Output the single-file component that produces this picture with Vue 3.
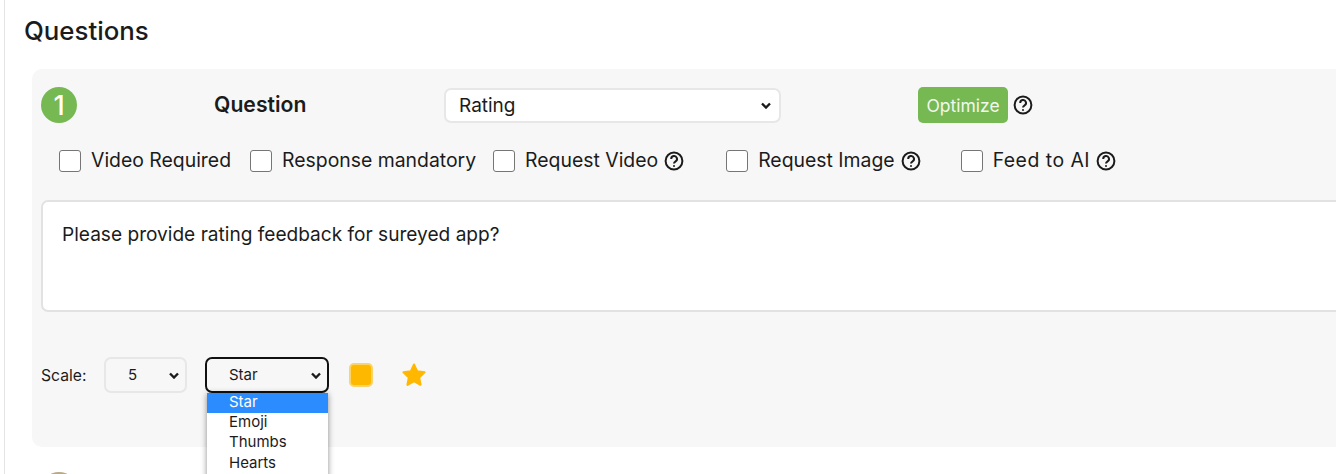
<script setup>
const checks = [
  { label: 'Video Required', help: false, cls: 'c1' },
  { label: 'Response mandatory', help: false, cls: 'c2' },
  { label: 'Request Video', help: true, cls: 'c3' },
  { label: 'Request Image', help: true, cls: 'c4' },
  { label: 'Feed to AI', help: true, cls: 'c5' }
]
const options = ['Star', 'Emoji', 'Thumbs', 'Hearts']
</script>

<template>
  <div class="page">
    <h2 class="title">Questions</h2>
    <section class="card">
      <div class="row-head">
        <span class="num">1</span>
        <span class="qlabel">Question</span>
        <div class="select type-select"><span>Rating</span><svg class="chev" viewBox="0 0 10 7"><path d="M1 1.5 5 5.5 9 1.5" /></svg></div>
        <button class="opt">Optimize</button>
        <svg class="help" viewBox="0 0 20 20"><circle cx="10" cy="10" r="8.4" /><path d="M7.2 8a2.9 2.9 0 1 1 4.4 2.4c-1 .6-1.6 1.1-1.6 2.2" /><circle class="dot" cx="10" cy="15" r="1" /></svg>
      </div>
      <div class="row-checks">
        <label v-for="c in checks" :key="c.label" class="check" :class="c.cls">
          <span class="box"></span>
          <span class="check-text">{{ c.label }}</span>
          <svg v-if="c.help" class="help" viewBox="0 0 20 20"><circle cx="10" cy="10" r="8.4" /><path d="M7.2 8a2.9 2.9 0 1 1 4.4 2.4c-1 .6-1.6 1.1-1.6 2.2" /><circle class="dot" cx="10" cy="15" r="1" /></svg>
        </label>
      </div>
      <div class="textarea">Please provide rating feedback for sureyed app?</div>
      <div class="row-scale">
        <span class="scale-label">Scale:</span>
        <div class="select small scale-select"><span>5</span><svg class="chev" viewBox="0 0 10 7"><path d="M1 1.5 5 5.5 9 1.5" /></svg></div>
        <div class="dropwrap">
          <div class="select small icon-select"><span>Star</span><svg class="chev" viewBox="0 0 10 7"><path d="M1 1.5 5 5.5 9 1.5" /></svg></div>
          <ul class="menu">
            <li v-for="(o, i) in options" :key="o" :class="{ active: i === 0 }">{{ o }}</li>
          </ul>
        </div>
        <span class="swatch"></span>
        <svg class="star" viewBox="0 0 24 24"><path d="M12 2.4l2.9 6.3 6.8.8-5 4.7 1.3 6.8-6-3.4-6 3.4 1.3-6.8-5-4.7 6.8-.8z" /></svg>
      </div>
    </section>
    <span class="next-num"></span>
  </div>
</template>

<style>
html, body { margin: 0; background: #fff; overflow: hidden; }
</style>

<style scoped>
.page {
  position: relative;
  width: 1336px;
  height: 474px;
  box-sizing: border-box;
  overflow: hidden;
  padding: 0 0 0 24px;
  font-family: Inter, "Liberation Sans", sans-serif;
  color: #1b1b1b;
  background: linear-gradient(to right, #fff 4px, #e4e4e4 4px, #e4e4e4 5px, #fff 5px);
}
.title { margin: 0; padding-top: 15px; height: 69px; box-sizing: border-box; font-size: 25.8px; line-height: 32px; font-weight: 500; }
.card {
  margin-left: 8px;
  width: 1400px;
  height: 378px;
  background: #f7f7f7;
  border-radius: 10px;
  box-sizing: border-box;
  padding: 18px 0 0 9px;
}
.row-head { display: flex; align-items: center; height: 36px; }
.num {
  width: 36px; height: 36px; border-radius: 50%;
  background: #76b852; color: #fff; display: flex; align-items: center; justify-content: center;
  font-size: 27px; font-weight: 500;
}
.qlabel { margin-left: 137px; width: 230px; padding-bottom: 3px; font-size: 21.2px; font-weight: 600; }
.select {
  box-sizing: border-box; display: flex; align-items: center; justify-content: space-between;
  background: #fff; border: 2px solid #e7e7e7; border-radius: 7px;
}
.type-select { width: 337px; height: 35px; padding: 0 8px 0 13px; font-size: 19px; }
.opt {
  margin-left: 137px; width: 90px; height: 36px; border: 0; border-radius: 5px; background: #76b852; color: #f2f7ee;
  font: 400 17.5px Inter, sans-serif; padding: 0;
}
.row-head > .help { margin-left: 5px; }
.help { width: 20px; height: 20px; fill: none; stroke: #1b1b1b; stroke-width: 2; flex: none; }
.help .dot { fill: #1b1b1b; stroke: none; }
.chev { width: 10px; height: 7px; fill: none; stroke: #1b1b1b; stroke-width: 2.4; flex: none; }
.row-checks { display: flex; align-items: center; height: 36px; margin-top: 20px; position: relative; }
.check { display: flex; align-items: center; font-size: 19.4px; gap: 10px; }
.check-text { padding-bottom: 2px; }
.check .help { margin-left: -4px; }
.box { width: 22px; height: 22px; box-sizing: border-box; background: #fff; border: 1px solid #767676; border-radius: 3px; flex: none; }
.c1 { margin-left: 18px; }
.c2 { margin-left: 19px; }
.c3 { margin-left: 17px; }
.c4 { margin-left: 42px; }
.c5 { margin-left: 40px; }
.c5 .check-text { letter-spacing: .5px; }
.textarea {
  margin-top: 21px; width: 1400px; height: 112px; box-sizing: border-box; background: #fff;
  border: 2px solid #e2e2e2; border-radius: 7px; padding: 19px 19px; font-size: 19.1px; line-height: 26px;
}
.row-scale { display: flex; align-items: center; height: 36px; margin-top: 45px; }
.scale-label { font-size: 15.7px; width: 63px; }
.small { height: 36px; padding-bottom: 2px; font-size: 15px; background: #f7f7f7; }
.small .chev { margin-top: 2px; }
.scale-select { width: 83px; padding-left: 22px; padding-right: 6px; }
.dropwrap { position: relative; margin-left: 18px; }
.icon-select { width: 124px; padding-left: 22px; padding-right: 6px; border-color: #111; border-radius: 7px; }
.menu {
  position: absolute; left: 2px; top: 36px; width: 121px; height: 100px; margin: 0; padding: 0; list-style: none;
  background: #fff; box-shadow: 0 1px 6px rgba(0,0,0,.45); font-size: 15px;
}
.menu li { padding-left: 22px; height: 20.2px; line-height: 17px; }
.menu li.active { background: #2b8cff; color: #fff; }
.swatch { width: 24px; height: 24px; margin-left: 20px; box-sizing: border-box; background: #ffb800; border: 2px solid #fbd36b; border-radius: 5px; }
.star { width: 26px; height: 26px; margin-left: 28px; fill: #ffb700; stroke: #ffb700; stroke-width: 2; stroke-linejoin: round; }
.next-num { position: absolute; left: 41px; top: 472px; width: 36px; height: 36px; border-radius: 50%; background: #b9a98a; }
</style>
